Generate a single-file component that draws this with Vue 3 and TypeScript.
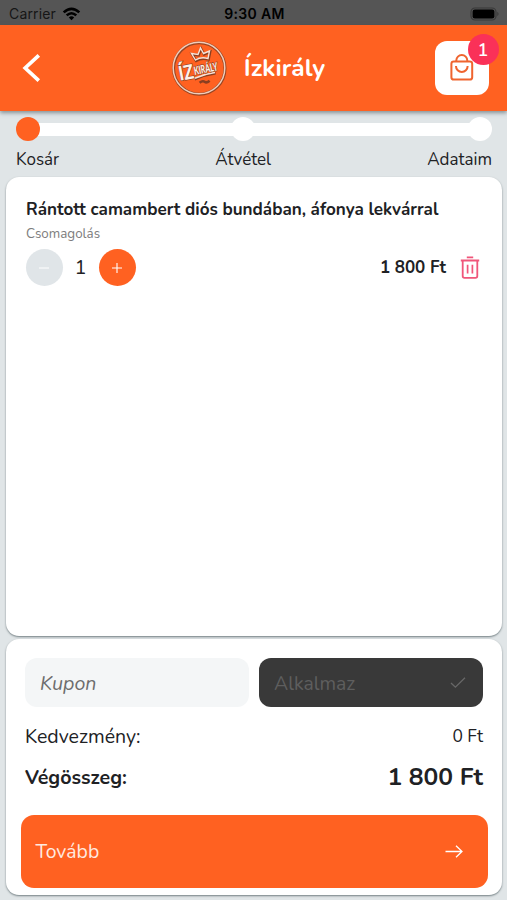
<script setup lang="ts">
import { ref, computed } from 'vue'

interface CartItem {
  name: string
  extra: string
  price: number
  quantity: number
}

const items = ref<CartItem[]>([
  { name: 'Rántott camambert diós bundában, áfonya lekvárral', extra: 'Csomagolás', price: 1800, quantity: 1 },
])
const steps = ['Kosár', 'Átvétel', 'Adataim']
const activeStep = 0
const discount = 0
const coupon = ref('')

const count = computed(() => items.value.reduce((sum, i) => sum + i.quantity, 0))
const total = computed(() => items.value.reduce((sum, i) => sum + i.quantity * i.price, 0) - discount)

function formatPrice(value: number): string {
  return String(value).replace(/\B(?=(\d{3})+$)/g, ' ') + ' Ft'
}
function removeItem(index: number): void {
  items.value.splice(index, 1)
}
</script>

<template>
  <div class="screen">
    <div class="status">
      <div class="carrier">
        <span>Carrier</span>
        <svg width="19" height="14" viewBox="0 0 19 14">
          <path d="M0.8 4.4Q9.5-3.4 18.2 4.4L16.4 6.2Q9.5.2 2.6 6.2Z" />
          <path d="M3.8 7.4Q9.5 2.4 15.2 7.4L13.4 9.2Q9.5 5.9 5.6 9.2Z" />
          <path d="M6.8 10.4Q9.5 8.2 12.2 10.4L9.5 13.2Z" />
        </svg>
      </div>
      <span class="clock">9:30 AM</span>
      <div class="power">
        <svg width="30" height="14" viewBox="0 0 30 14">
          <rect x="1" y="1" width="25" height="12" rx="4" fill="none" stroke="#393939" stroke-width="1.2" />
          <rect x="2.6" y="2.6" width="21.8" height="8.8" rx="2.2" fill="#000" />
          <path d="M27.3 4.8Q29.8 7 27.3 9.2Z" fill="#393939" />
        </svg>
      </div>
    </div>

    <header class="header">
      <button class="back" aria-label="Vissza">
        <svg width="20" height="30" viewBox="0 0 20 30">
          <path d="M16.8 2.4 3.2 15 16.8 27.6" fill="none" stroke="#fff" stroke-width="3.7" />
        </svg>
      </button>
      <div class="brand">
        <svg class="logo" width="56" height="56" viewBox="0 0 56 56">
          <circle cx="28.3" cy="28.5" r="25.7" fill="none" stroke="#984523" stroke-width="3" />
          <circle cx="28" cy="28" r="25.8" fill="none" stroke="#f0cdbb" stroke-width="1.5" />
          <g fill="none" stroke="#8a3e20" stroke-width="2.6" transform="translate(.6 .8)">
            <path d="M24.5 20 20.5 13.5 27 14.5 29.5 8 32.5 13.5 38.5 11 37 18.5Q30 16.5 24.5 20Z" />
            <path d="M23 38.5Q33 34 44 32.5M28 42Q31 39.5 33 41T38 40" />
          </g>
          <g fill="none" stroke="#f7e2d6" stroke-width="1.4">
            <path d="M24.5 20 20.5 13.5 27 14.5 29.5 8 32.5 13.5 38.5 11 37 18.5Q30 16.5 24.5 20Z" />
            <path d="M23 38.5Q33 34 44 32.5" />
          </g>
          <g class="logo-text" transform="rotate(-11 28 28)">
            <text x="7" y="37" font-size="20" textLength="15" lengthAdjust="spacingAndGlyphs">ÍZ</text>
            <text x="22.5" y="34" font-size="11.5" textLength="24" lengthAdjust="spacingAndGlyphs">KIRÁLY</text>
          </g>
        </svg>
        <h1>Ízkirály</h1>
      </div>
      <button class="bag" aria-label="Kosár">
        <svg width="24" height="28" viewBox="0 0 24 28" fill="none" stroke="#ef642f" stroke-width="2">
          <rect x="1.4" y="7.4" width="20.8" height="18.2" rx="2.4" />
          <path d="M6.3 7.2V6.5a5.5 5.5 0 0 1 11 0v.7" />
          <path d="M6 12v.2a5.8 5.8 0 0 0 11.6 0v-.2" />
        </svg>
        <span class="badge">{{ count }}</span>
      </button>
    </header>

    <nav class="stepper">
      <div class="track">
        <i v-for="(step, n) in steps" :key="step" class="dot" :class="{ active: n === activeStep }"></i>
      </div>
      <div class="labels">
        <span v-for="step in steps" :key="step">{{ step }}</span>
      </div>
    </nav>

    <main class="card cart">
      <article v-for="(item, index) in items" :key="item.name">
        <h2><span>{{ item.name }}</span></h2>
        <p class="extra"><span>{{ item.extra }}</span></p>
        <div class="row">
          <button class="round minus" aria-label="Kevesebb">
            <svg width="12" height="12" viewBox="0 0 12 12"><path d="M1 6h10" stroke="#fff" stroke-width="1" /></svg>
          </button>
          <span class="quantity">{{ item.quantity }}</span>
          <button class="round" aria-label="Több" @click="item.quantity++">
            <svg width="12" height="12" viewBox="0 0 12 12"><path d="M1 6h10M6 1v10" stroke="#fff" stroke-width="1.1" /></svg>
          </button>
          <span class="price">{{ formatPrice(item.price * item.quantity) }}</span>
          <button class="trash" aria-label="Törlés" @click="removeItem(index)">
            <svg width="20" height="24" viewBox="0 0 20 24" fill="none" stroke="#f0567a" stroke-width="1.8">
              <path d="M.8 4.5h18.4M6.8 1.4h6.4M2.7 4.5v15.6q0 1.8 1.8 1.8h11q1.8 0 1.8-1.8v-15.6" />
              <path d="M7.6 8.8v8.6M12.4 8.8v8.6" stroke-width="1.7" />
            </svg>
          </button>
        </div>
      </article>
    </main>

    <section class="card summary">
      <div class="coupon">
        <input v-model="coupon" placeholder="Kupon" />
        <button class="apply">
          <span>Alkalmaz</span>
          <svg width="16" height="12" viewBox="0 0 16 12"><path d="M1 6 5.4 10.2 15 .8" fill="none" stroke="#686868" stroke-width="1.3" /></svg>
        </button>
      </div>
      <div class="line discount"><span>Kedvezmény:</span><span class="amount">{{ formatPrice(discount) }}</span></div>
      <div class="line total"><span>Végösszeg:</span><span class="amount">{{ formatPrice(total) }}</span></div>
      <button class="next">
        <span>Tovább</span>
        <svg width="18" height="14" viewBox="0 0 18 14"><path d="M.5 6.5h16.5M11 .7 17 6.5 11 12.3" fill="none" stroke="#fff" stroke-width="1.3" /></svg>
      </button>
    </section>
  </div>
</template>

<style>
body {
  margin: 0;
}
</style>

<style scoped>
* {
  box-sizing: border-box;
}
.screen {
  width: 507px;
  height: 900px;
  display: flex;
  flex-direction: column;
  overflow: hidden;
  background: #e0e5e7;
  color: #202124;
  font-family: Nunito, Lato, sans-serif;
}
button {
  border: 0;
  padding: 0;
  background: none;
  font: inherit;
  color: inherit;
}
svg {
  display: block;
  overflow: visible;
}
h1, h2, p {
  margin: 0;
}
.status {
  height: 25px;
  flex: none;
  display: grid;
  grid-template-columns: 1fr auto 1fr;
  align-items: center;
  padding: 2px 7px 0 9px;
  background: #555;
  color: #000;
  font: 14px/20px Inter, sans-serif;
}
.carrier {
  display: flex;
  align-items: center;
  gap: 6px;
  color: #161616;
  letter-spacing: 0.15px;
}
.clock {
  font-weight: 600;
  letter-spacing: 0.3px;
}
.power {
  justify-self: end;
}
.header {
  height: 86px;
  flex: none;
  display: flex;
  align-items: center;
  justify-content: space-between;
  padding: 0 18px 0 22px;
  background: #ff6121;
  box-shadow: 0 2px 4px rgba(60, 75, 80, 0.55);
  z-index: 1;
}
.back {
  width: 39px;
}
.brand {
  display: flex;
  align-items: center;
  gap: 17px;
  color: #fff;
}
.logo-text {
  font-family: Lato, sans-serif;
  font-weight: 900;
  fill: #fff0e8;
  stroke: #8a3e20;
  stroke-width: 1.2px;
  paint-order: stroke;
}
h1 {
  font-size: 24.5px;
  font-weight: 700;
}
.bag {
  position: relative;
  width: 54px;
  height: 54px;
  display: grid;
  place-items: center;
  border-radius: 12px;
  background: #fff;
}
.badge {
  position: absolute;
  top: -7px;
  right: -10px;
  width: 31px;
  height: 31px;
  border-radius: 50%;
  background: #fa3158;
  color: #fff;
  font-size: 18px;
  line-height: 32px;
  font-weight: 600;
  text-indent: -1px;
}
.stepper {
  height: 66px;
  flex: none;
  padding: 6px 15px 0 16px;
}
.track {
  display: flex;
  justify-content: space-between;
  height: 24px;
  background: linear-gradient(#fff, #fff) 12px 6px / 450px 13px no-repeat;
}
.dot {
  width: 24px;
  height: 24px;
  border-radius: 50%;
  background: #fff;
}
.dot.active {
  background: #ff6121;
}
.dot:nth-child(2) {
  margin-right: 22px;
}
.labels {
  display: flex;
  justify-content: space-between;
  margin-top: 8px;
  font-size: 17px;
  line-height: 22px;
}
.card {
  width: 496px;
  margin-left: 6px;
  flex: none;
  border-radius: 13px;
  background: #fff;
  box-shadow: 0 1px 2px rgba(70, 85, 90, 0.7);
}
.cart {
  height: 459px;
  padding: 21px 20px 0;
}
h2 {
  font-size: 17.08px;
  line-height: 24px;
  font-weight: 700;
  white-space: nowrap;
}
.extra {
  margin-top: 2px;
  color: #7d7d7d;
  font-size: 13.4px;
  line-height: 20px;
}
.row {
  display: flex;
  align-items: center;
  margin: 5px 0 0 -0.5px;
}
.round {
  width: 37px;
  height: 37px;
  display: grid;
  place-items: center;
  border-radius: 50%;
  background: #ff6121;
}
.minus {
  background: #e0e5e8;
}
.quantity {
  width: 36px;
  text-align: center;
  font-size: 20px;
}
.price {
  margin-left: auto;
  font-size: 17px;
  line-height: 23px;
  font-weight: 700;
}
.trash {
  margin: 0 2px 0 14px;
}
.summary {
  height: 256px;
  margin-top: 3px;
  padding: 19px 15px 0;
}
.coupon {
  display: flex;
  gap: 10px;
  padding: 0 4px;
}
input,
.apply {
  width: 224px;
  height: 49px;
  border: 0;
  border-radius: 12px;
  background: #f4f6f7;
  font-family: inherit;
  font-size: 19.6px;
}
input {
  padding: 2px 15px 0;
  font-style: italic;
}
input::placeholder {
  color: #6d6d6d;
  opacity: 1;
}
.apply {
  display: flex;
  align-items: center;
  justify-content: space-between;
  padding: 1px 17px 0 15px;
  background: #393939;
  color: #5e5e5e;
  font-size: 19.4px;
}
.line {
  display: flex;
  align-items: center;
  justify-content: space-between;
  padding: 0 4px;
  height: 28px;
}
.discount {
  margin-top: 15px;
  font-size: 19.5px;
}
.discount .amount {
  font-size: 17.4px;
}
.total {
  margin-top: 13px;
  font-size: 19.6px;
  font-weight: 700;
}
.total .amount {
  font-size: 24.6px;
}
.next {
  width: 467px;
  height: 73px;
  margin-top: 24px;
  margin-left: -0.5px;
  display: flex;
  align-items: center;
  justify-content: space-between;
  padding: 0 25px 0 15px;
  border-radius: 13px;
  background: #ff6121;
  color: #ffeae0;
  font-size: 19.4px;
}
</style>
